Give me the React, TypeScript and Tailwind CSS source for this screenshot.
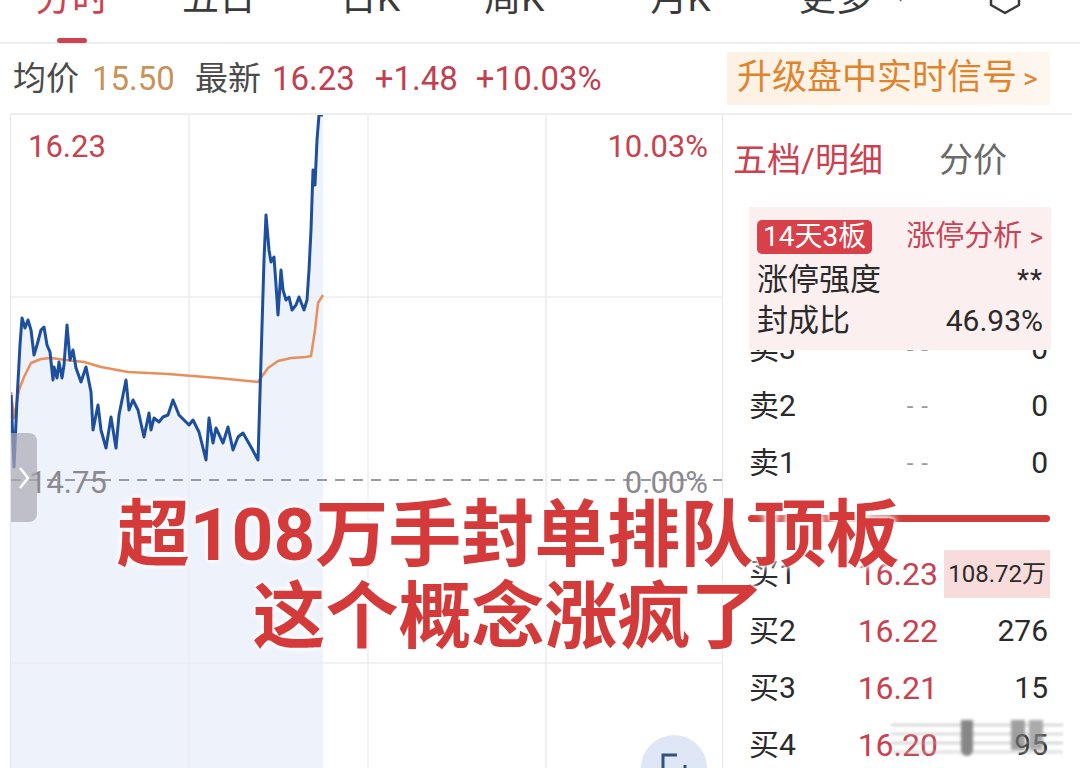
const price: [number, number][] = [
  [10, 395], [13, 467], [16, 400], [19, 345], [21, 318], [24, 328], [27, 320], [30, 330], [33, 355], [36, 345],
  [40, 330], [43, 327], [46, 345], [49, 352], [52, 380], [53, 367], [56, 378], [58, 362], [61, 378], [63, 365],
  [66, 325], [69, 360], [72, 350], [75, 368], [80, 382], [85, 367], [90, 392], [92, 430], [97, 405], [100, 430],
  [105, 448], [110, 417], [115, 448], [118, 415], [125, 380], [128, 410], [132, 400], [137, 410], [143, 437],
  [148, 413], [150, 430], [153, 418], [158, 422], [162, 417], [167, 415], [172, 400], [178, 415], [188, 425],
  [192, 420], [198, 432], [205, 460], [208, 418], [212, 443], [215, 428], [222, 443], [227, 427], [232, 450],
  [237, 437], [242, 433], [250, 447], [257, 460], [260, 360], [263, 260], [265, 215], [268, 250], [270, 262],
  [273, 257], [275, 285], [277, 315], [280, 270], [282, 290], [285, 300], [288, 297], [291, 310], [295, 305],
  [298, 297], [303, 310], [306, 300], [308, 270], [310, 230], [312, 170], [314, 185], [316, 140], [318, 115], [322, 115],
];

const avg: [number, number][] = [
  [10, 392], [13, 418], [18, 390], [23, 377], [30, 363], [40, 359], [50, 358], [65, 360], [83, 362], [100, 367],
  [127, 372], [167, 374], [217, 378], [257, 382], [262, 375], [267, 368], [277, 361], [290, 358], [305, 357],
  [310, 356], [314, 330], [317, 303], [322, 295],
];

const pts = (a: [number, number][]) => a.map(([x, y]) => `${x},${y}`).join(" ");

const sells = [
  { l: "卖5", p: "--", v: "0" },
  { l: "卖4", p: "--", v: "0" },
  { l: "卖3", p: "--", v: "0" },
  { l: "卖2", p: "--", v: "0" },
  { l: "卖1", p: "--", v: "0" },
];

const buys = [
  { l: "买1", p: "16.23", v: "108.72万", hot: true },
  { l: "买2", p: "16.22", v: "276" },
  { l: "买3", p: "16.21", v: "15" },
  { l: "买4", p: "16.20", v: "95" },
];

function Chart() {
  return (
    <div className="relative h-full w-[712px] border-l border-[#e6e6ea]">
      <svg width="712" height="653" viewBox="10 115 712 653" className="block">
        <polygon points={`${pts(price)} 322,768 10,768`} fill="#edf2fb" />
        {[188, 367, 545].map((x) => (
          <line key={x} x1={x} y1={115} x2={x} y2={768} stroke="#ececf0" strokeWidth="1.5" />
        ))}
        {[297, 663].map((y) => (
          <line key={y} x1={10} y1={y} x2={722} y2={y} stroke="#ececf0" strokeWidth="1.5" />
        ))}
        <line x1={10} y1={480} x2={722} y2={480} stroke="#9a9aa0" strokeWidth="2" strokeDasharray="10 8" />
        <polyline points={pts(avg)} fill="none" stroke="#e98f5c" strokeWidth="2.5" strokeLinejoin="round" />
        <polyline points={pts(price)} fill="none" stroke="#1d4f9e" strokeWidth="3" strokeLinejoin="round" />
      </svg>

      <span className="absolute left-[17px] top-[16px] text-[31px] leading-none text-[#c8414e]">16.23</span>
      <span className="absolute right-[14px] top-[16px] text-[31px] leading-none text-[#c8414e]">10.03%</span>
      <span className="absolute left-[18px] top-[352px] text-[31px] leading-none text-[#8a8a90]">14.75</span>
      <span className="absolute right-[14px] top-[352px] text-[31px] leading-none text-[#8a8a90]">0.00%</span>

      {/* 左侧收起把手 */}
      <div className="absolute left-0 top-[318px] flex h-[89px] w-[26px] items-center justify-center rounded-r-lg bg-[#a9a9b2]/70">
        <svg width="14" height="26" viewBox="0 0 14 26">
          <path d="M3 3 L11 13 L3 23" fill="none" stroke="#fff" strokeWidth="2.5" />
        </svg>
      </div>

      {/* 底部按钮 */}
      <div className="absolute left-[630px] top-[620px] flex h-[66px] w-[66px] items-start justify-center rounded-full bg-[#dfe7f6] pt-[16px]">
        <svg width="30" height="40" viewBox="0 0 30 40">
          <path d="M4 20 V4 H18" fill="none" stroke="#33507f" strokeWidth="3" />
          <path d="M26 14 V30" fill="none" stroke="#33507f" strokeWidth="3" />
        </svg>
      </div>
    </div>
  );
}

function OrderRow({ l, p, v, hot, red }: { l: string; p: string; v: string; hot?: boolean; red?: boolean }) {
  return (
    <div className="flex h-[57px] items-center pl-[26px] pr-[24px]">
      <span className="w-[60px] text-[30px] text-[#2a2a2a]">{l}</span>
      <span
        className={
          red
            ? "w-[129px] text-right text-[32px] text-[#c8414e]"
            : "w-[129px] pr-[2px] text-right text-[24px] tracking-[8px] text-[#9a9aa0]"
        }
      >
        {p}
      </span>
      {hot ? (
        <span className="ml-auto -mr-[2px] flex h-[48px] w-[106px] items-center justify-end bg-[#f8dcdc] pr-[4px] text-[24px] text-[#2a2a2a]">
          {v}
        </span>
      ) : (
        <span className="ml-auto text-[30px] text-[#2a2a2a]">{v}</span>
      )}
    </div>
  );
}

function Panel() {
  return (
    <div className="relative h-full flex-1 border-l border-[#e6e6ea]">
      <div className="flex h-[91px] items-center pl-[10px] text-[34px]">
        <span className="text-[#cf3f4e]">五档/明细</span>
        <span className="ml-[56px] text-[#6a6a6a]">分价</span>
      </div>

      <div>
        {sells.map((r) => (
          <OrderRow key={r.l} {...r} />
        ))}
        <div className="flex h-[54px] items-center pl-[25px] pr-[22px]">
          <div className="h-[7px] w-full rounded-full bg-[#d33a3a] shadow-[0_0_3px_2px_#fff]" />
        </div>
        {buys.map((r) => (
          <OrderRow key={r.l} {...r} red />
        ))}
      </div>

      {/* 涨停卡片 */}
      <div className="absolute left-[26px] top-[92px] h-[143px] w-[302px] bg-[#fcefef] px-[8px] pt-[12px]">
        <div className="flex items-center justify-between">
          <span className="rounded-[5px] bg-[#d8404a] px-[6px] text-[28px] leading-[34px] text-white">14天3板</span>
          <span className="text-[29px] leading-[34px] text-[#c84455]">
            涨停分析 <span className="text-[26px]">&gt;</span>
          </span>
        </div>
        <div className="mt-[5px] flex items-center justify-between text-[31px] leading-[42px] text-[#2a2a2a]">
          <span>涨停强度</span>
          <span className="text-[28px] tracking-[1px]">**</span>
        </div>
        <div className="flex items-center justify-between text-[31px] leading-[40px] text-[#2a2a2a]">
          <span>封成比</span>
          <span className="text-[30px]">46.93%</span>
        </div>
      </div>

      {/* 水印 */}
      <div className="absolute left-[168px] top-[603px] h-[40px] w-[172px] opacity-70 blur-[1.5px]">
        <div className="mt-[6px] h-[2px] bg-[#b0b0b0]" />
        <div className="mt-[7px] h-[2px] bg-[#b8b8b8]" />
        <div className="mt-[7px] h-[2px] bg-[#b0b0b0]" />
        <div className="mt-[7px] h-[2px] bg-[#c0c0c0]" />
        <div className="absolute left-[70px] top-[2px] h-[36px] w-[12px] rounded-b-md bg-[#555]" />
        <div className="absolute left-[120px] top-[2px] h-[30px] w-[14px] bg-[#777]" />
        <div className="absolute left-[138px] top-[2px] h-[30px] w-[14px] bg-[#888]" />
      </div>
    </div>
  );
}

export default function App() {
  return (
    <div className="relative h-[768px] w-[1080px] overflow-hidden bg-white font-['Roboto','Noto_Sans_CJK_SC',sans-serif]">
      {/* 顶部标签 */}
      <div className="flex h-[44px] items-start border-b-2 border-[#eeeeee] text-[37px] leading-none">
        <div className="ml-[32px] flex w-[80px] flex-col items-center">
          <span className="-mt-[20px] text-[#d2414f]">分时</span>
          <span className="mt-[21px] h-[5px] w-[30px] rounded-full bg-[#d2414f]" />
        </div>
        <span className="-mt-[20px] ml-[70px] text-[#3a3a3a]">五日</span>
        <span className="-mt-[20px] ml-[84px] text-[#3a3a3a]">日K</span>
        <span className="-mt-[20px] ml-[84px] text-[#3a3a3a]">周K</span>
        <span className="-mt-[20px] ml-[106px] text-[#3a3a3a]">月K</span>
        <span className="-mt-[20px] ml-[88px] text-[#3a3a3a]">更多</span>
        <span className="-mt-[10px] ml-[24px] text-[14px] text-[#3a3a3a]">▾</span>
        <svg className="-mt-[22px] ml-[84px]" width="34" height="38" viewBox="0 0 34 38">
          <path d="M17 2 L31 10 L31 27 L17 35 L3 27 L3 10 Z" fill="none" stroke="#3a3a3a" strokeWidth="2.5" strokeLinejoin="round" />
        </svg>
      </div>

      {/* 行情摘要 */}
      <div className="flex h-[69px] items-center text-[33px]">
        <span className="ml-[13px] text-[#4a4a4a]">均价</span>
        <span className="ml-[13px] text-[#c99259]">15.50</span>
        <span className="ml-[20px] text-[#4a4a4a]">最新</span>
        <span className="ml-[11px] text-[#c23f4f]">16.23</span>
        <span className="ml-[20px] text-[#c23f4f]">+1.48</span>
        <span className="ml-[18px] text-[#c23f4f]">+10.03%</span>
        <div className="ml-auto mr-[30px] flex h-[53px] w-[323px] items-center bg-gradient-to-r from-[#fdf1e4] to-[#fef7ef] pl-[10px] text-[35px] text-[#df842d]">
          升级盘中实时信号
          <span className="ml-[6px] text-[28px]">&gt;</span>
        </div>
      </div>

      {/* 主体 */}
      <div className="ml-[10px] mr-[8px] flex h-[655px] border-t-2 border-[#eeeeee]">
        <Chart />
        <Panel />
      </div>

      {/* 标题覆盖文字 */}
      <div className="absolute left-0 top-[494px] w-[1016px] text-center text-[73px] font-bold leading-[82px] text-[#d43a3a] [text-shadow:0_0_3px_#fff,0_0_6px_#fff,0_0_10px_#fff]">
        <div>超108万手封单排队顶板</div>
        <div>这个概念涨疯了</div>
      </div>
    </div>
  );
}
